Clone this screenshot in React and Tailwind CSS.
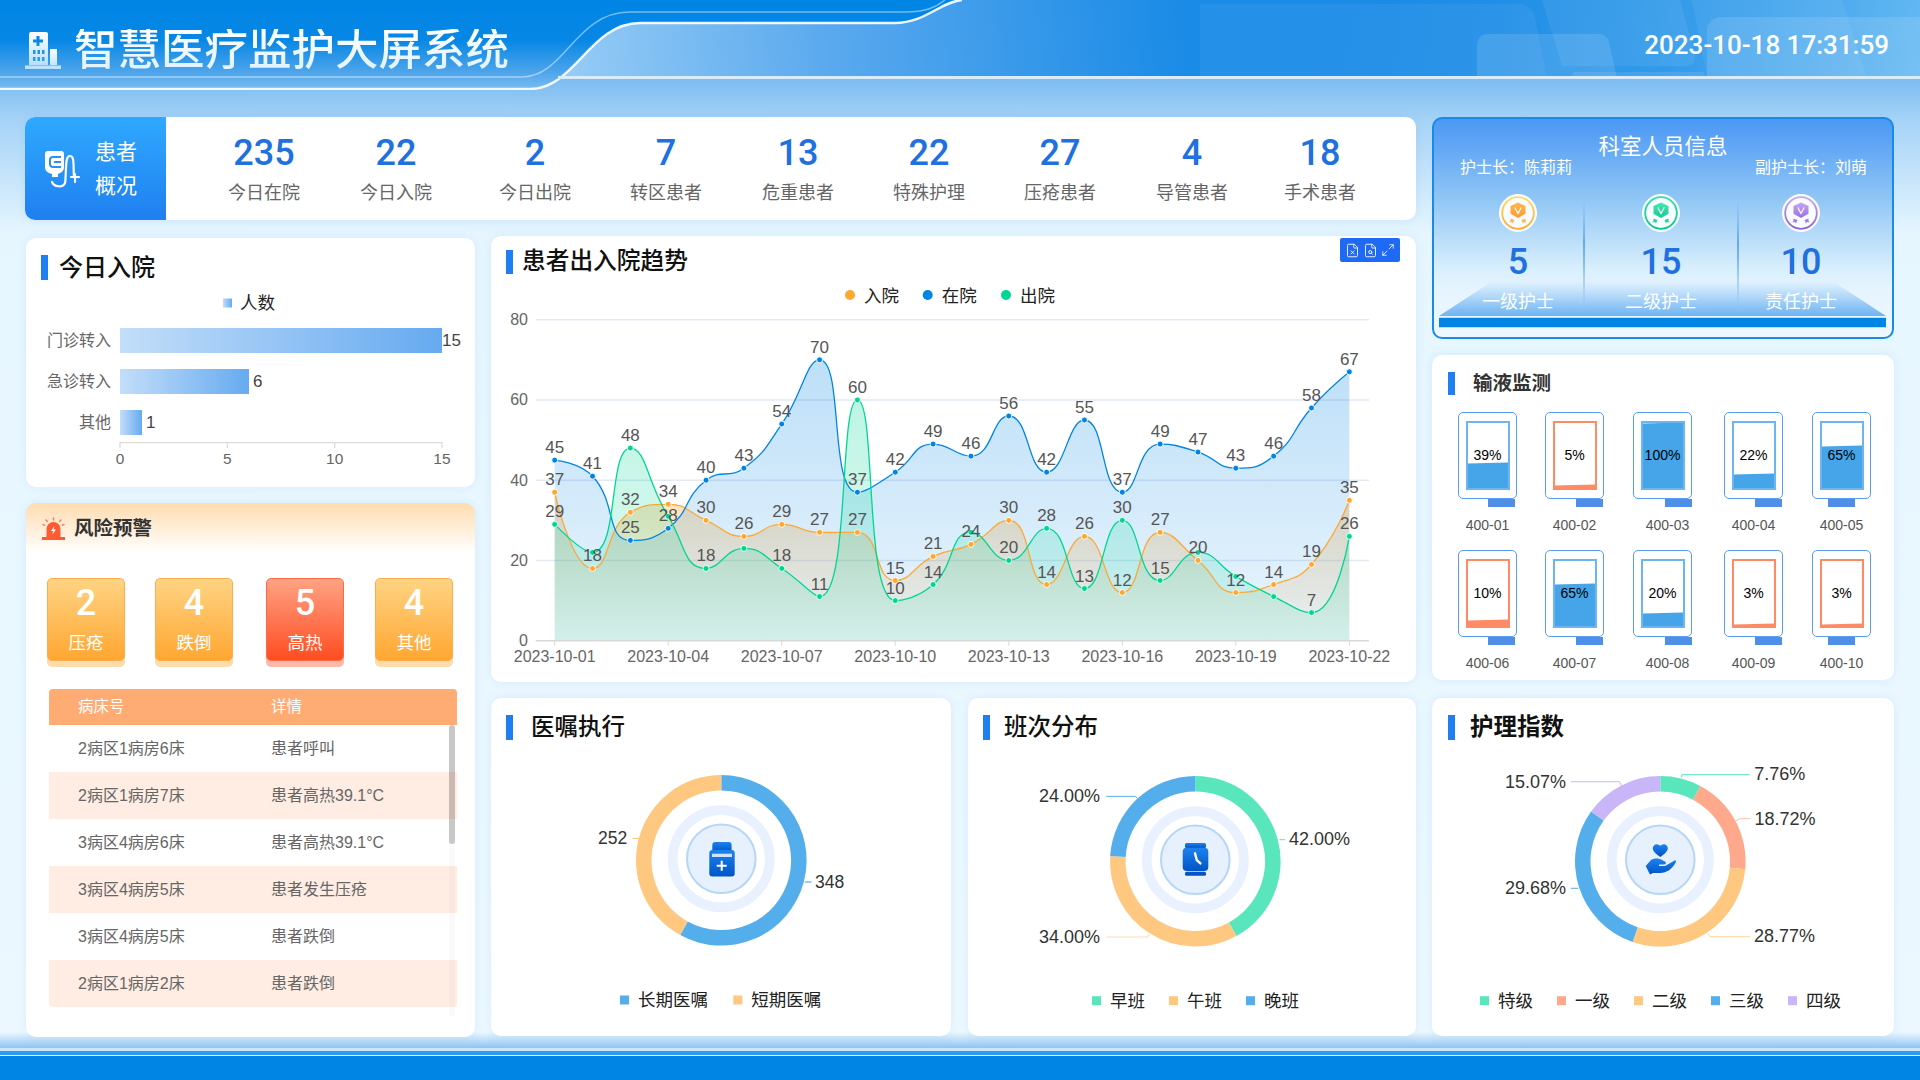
import { FileX, FileSearch, Maximize2 } from 'lucide-react';

const summaryStats = [
  { value: 235, label: '今日在院', gap: 'ml-[58px]' },
  { value: 22, label: '今日入院', gap: 'ml-[52px]' },
  { value: 2, label: '今日出院', gap: 'ml-[59px]' },
  { value: 7, label: '转区患者', gap: 'ml-[51px]' },
  { value: 13, label: '危重患者', gap: 'ml-[52px]' },
  { value: 22, label: '特殊护理', gap: 'ml-[51px]' },
  { value: 27, label: '压疮患者', gap: 'ml-[51px]' },
  { value: 4, label: '导管患者', gap: 'ml-[52px]' },
  { value: 18, label: '手术患者', gap: 'ml-[48px]' },
];

const riskCards = [
  { value: 2, label: '压疮', gap: '', tone: 'border-[#ffad4a] bg-[linear-gradient(180deg,#ffd483,#ffa631)]', strip: 'bg-[#ffdcab]' },
  { value: 4, label: '跌倒', gap: 'ml-[30px]', tone: 'border-[#ffad4a] bg-[linear-gradient(180deg,#ffd483,#ffa631)]', strip: 'bg-[#ffdcab]' },
  { value: 5, label: '高热', gap: 'ml-[33px]', tone: 'border-[#ff6a45] bg-[linear-gradient(180deg,#ffa384,#ff4c21)]', strip: 'bg-[#ffb9a9]' },
  { value: 4, label: '其他', gap: 'ml-[31px]', tone: 'border-[#ffad4a] bg-[linear-gradient(180deg,#ffd483,#ffa631)]', strip: 'bg-[#ffdcab]' },
];

const riskRows = [
  ['2病区1病房6床', '患者呼叫'],
  ['2病区1病房7床', '患者高热39.1°C'],
  ['3病区4病房6床', '患者高热39.1°C'],
  ['3病区4病房5床', '患者发生压疮'],
  ['3病区4病房5床', '患者跌倒'],
  ['2病区1病房2床', '患者跌倒'],
];

const infusions = [
  { id: '400-01', pct: 39 },
  { id: '400-02', pct: 5 },
  { id: '400-03', pct: 100, shift: 'pl-[10px]' },
  { id: '400-04', pct: 22 },
  { id: '400-05', pct: 65 },
  { id: '400-06', pct: 10 },
  { id: '400-07', pct: 65 },
  { id: '400-08', pct: 20, shift: 'pl-[10px]' },
  { id: '400-09', pct: 3 },
  { id: '400-10', pct: 3 },
];

const dates = Array.from({ length: 22 }, (_, i) => `2023-10-${String(i + 1).padStart(2, '0')}`);

const series = [
  {
    id: 'admit',
    color: '#ffa733',
    top: 0.34,
    bottom: 0.04,
    data: [37, 18, 32, 34, 30, 26, 29, 27, 27, 15, 21, 24, 30, 14, 26, 12, 27, 20, 12, 14, 19, 35],
    hidden: [],
  },
  {
    id: 'stay',
    color: '#0085e5',
    top: 0.26,
    bottom: 0.08,
    data: [45, 41, 25, 28, 40, 43, 54, 70, 37, 42, 49, 46, 56, 42, 55, 37, 49, 47, 43, 46, 58, 67],
    hidden: [],
  },
  {
    id: 'leave',
    color: '#00d694',
    top: 0.26,
    bottom: 0.1,
    data: [29, 22, 48, 31, 18, 23, 18, 11, 60, 10, 14, 27, 20, 28, 13, 30, 15, 22, 16, 11, 7, 26],
    hidden: [1, 3, 5, 11, 17, 18, 19],
  },
];

const chartX = (i) => 554.7 + i * 37.84;
const chartY = (v) => 640.7 - v * 4.0125;

function clamp(v, a, b) {
  return Math.min(Math.max(v, Math.min(a, b)), Math.max(a, b));
}

// same control point rule as a smoothed echarts line
function smoothPath(points) {
  const smooth = 0.5;
  const n = points.length;
  let d = `M${points[0][0]} ${points[0][1]}`;
  let cp0 = points[0];
  for (let i = 1; i < n; i++) {
    const [x, y] = points[i];
    const [px, py] = points[i - 1];
    if (i === n - 1) {
      d += `C${cp0[0]} ${cp0[1]} ${x} ${y} ${x} ${y}`;
      break;
    }
    const [nx, ny] = points[i + 1];
    const lenPrev = Math.hypot(x - px, y - py);
    const lenNext = Math.hypot(nx - x, ny - y);
    const ratio = lenNext / (lenNext + lenPrev);
    const ncx = clamp(x + (nx - px) * smooth * ratio, x, nx);
    const ncy = clamp(y + (ny - py) * smooth * ratio, y, ny);
    const vx = ncx - x;
    const vy = ncy - y;
    let c1x = clamp(x - (vx * lenPrev) / lenNext, px, x);
    let c1y = clamp(y - (vy * lenPrev) / lenNext, py, y);
    const ux = x - c1x;
    const uy = y - c1y;
    const ncx2 = x + (ux * lenNext) / lenPrev;
    const ncy2 = y + (uy * lenNext) / lenPrev;
    d += `C${cp0[0]} ${cp0[1]} ${c1x} ${c1y} ${x} ${y}`;
    cp0 = [ncx2, ncy2];
  }
  return d;
}

function arcPath(cx, cy, R, r, from, to) {
  const pt = (rad, a) => [cx + rad * Math.sin(a), cy - rad * Math.cos(a)];
  const [x0, y0] = pt(R, from);
  const [x1, y1] = pt(R, to);
  const [x2, y2] = pt(r, to);
  const [x3, y3] = pt(r, from);
  const large = to - from > Math.PI ? 1 : 0;
  return `M${x0} ${y0}A${R} ${R} 0 ${large} 1 ${x1} ${y1}L${x2} ${y2}A${r} ${r} 0 ${large} 0 ${x3} ${y3}Z`;
}

function SectionTitle({ children, className, gap, textClass }) {
  return (
    <div className={`flex items-center ${className}`}>
      <span className="h-full w-[7px] bg-[#1f7ff0]"></span>
      <span className={`${gap} ${textClass} whitespace-nowrap leading-none`}>{children}</span>
    </div>
  );
}

function HospitalIcon() {
  return (
    <svg width="36" height="37" viewBox="0 0 36 37">
      <defs>
        <linearGradient id="hospitalFill" x1="0" y1="0" x2="0" y2="1">
          <stop offset="0" stopColor="#ffffff" />
          <stop offset="1" stopColor="#b5e0ff" />
        </linearGradient>
      </defs>
      <path
        fill="url(#hospitalFill)"
        fillRule="evenodd"
        d="M6 0h15a2 2 0 0 1 2 2v31H4V2a2 2 0 0 1 2-2zM11.5 4v3.5H8v3h3.5V14h3v-3.5H18v-3h-3.5V4zM8 18v4h2.5v-4zM12.5 18v4H15v-4zM17 18v4h2.5v-4zM8 25v4h2.5v-4zM12.5 25v4H15v-4zM17 25v4h2.5v-4z"
      />
      <path fill="url(#hospitalFill)" d="M25 17h7v16h-7zM0 33.5h36V37H0z" />
    </svg>
  );
}

function DripIcon() {
  return (
    <svg width="60" height="55" viewBox="0 0 60 55" fill="none">
      <path fill="#fff" d="M16 10h15a3 3 0 0 1 3 3v13c0 4-3 6-6 7v3h-6v-3c-4-1-7-3-7-7V13a3 3 0 0 1 3-3z" />
      <path stroke="#2a90f5" strokeWidth="2" d="M31 16h-8a3 3 0 0 0-3 3v4a3 3 0 0 0 3 3h8M24 21h7" />
      <path
        stroke="#fff"
        strokeWidth="2.2"
        strokeLinecap="round"
        d="M22 41c2 5 11 6 13 1 1-3 .5-20 2-24 1-4 5-4 6 0 1 5 .5 14 1 18M41 36h8M45 33v8"
      />
    </svg>
  );
}

function AlarmIcon() {
  return (
    <svg width="23" height="23" viewBox="0 0 23 23" fill="none">
      <path fill="#ff5a30" d="M4.5 20v-8a7 7 0 0 1 14 0v8zM0 20h23v3H0z" />
      <path fill="#fff" d="M12.5 9l-3.5 5h2.2l-1 3.8 3.8-5.3h-2.3z" />
      <path stroke="#ff7a50" strokeWidth="1.4" strokeLinecap="round" d="M11.5 1v2M4 3l1.3 1.5M19 3l-1.3 1.5M1 7.5l1.7.7M22 7.5l-1.7.7" />
    </svg>
  );
}

function MedalIcon({ id, ring, ringEnd, shield, shieldEnd, ribbon }) {
  return (
    <svg width="38" height="38" viewBox="0 0 38 38">
      <defs>
        <linearGradient id={`${id}Ring`} x1="0" y1="0" x2="0" y2="1">
          <stop offset="0" stopColor={ring} />
          <stop offset="1" stopColor={ringEnd} />
        </linearGradient>
        <linearGradient id={`${id}Shield`} x1="0" y1="0" x2="0" y2="1">
          <stop offset="0" stopColor={shield} />
          <stop offset="1" stopColor={shieldEnd} />
        </linearGradient>
      </defs>
      <circle cx="19" cy="19" r="18.5" fill="#f7fbff" stroke="#ffffff" />
      <circle cx="19" cy="19" r="15.8" fill="#f9fcff" stroke={`url(#${id}Ring)`} strokeWidth="1.8" />
      <path fill={`url(#${id}Shield)`} d="M19 8.5l7.5 3.6v7.6L19 24l-7.5-4.3v-7.6z" />
      <path fill="none" stroke="#fff" strokeWidth="1.2" d="M15.8 13.5l3.2 6 3.2-6" />
      <path fill={ribbon} d="M11.5 24.5l4 1.5-1.5 3.5-1-1.5-2.5.5 1-2zM26.5 24.5l-4 1.5 1.5 3.5 1-1.5 2.5.5-1-2z" />
    </svg>
  );
}

function AdmissionBars() {
  const bars = [
    { label: '门诊转入', value: 15, y: 328, end: 442 },
    { label: '急诊转入', value: 6, y: 369, end: 249 },
    { label: '其他', value: 1, y: 410, end: 142 },
  ];
  return (
    <svg className="block h-[207px] w-[449px]" viewBox="26 280 449 207">
      <defs>
        <linearGradient id="barFill" x1="0" y1="0" x2="1" y2="0">
          <stop offset="0" stopColor="#c3def9" />
          <stop offset="1" stopColor="#66aaf0" />
        </linearGradient>
      </defs>
      <rect x="223" y="298.5" width="9" height="9" fill="url(#barFill)" />
      <text x="240" y="308.5" fontSize="17.5" fill="#222">人数</text>
      {bars.map((bar) => (
        <g key={bar.label}>
          <text x="111" y={bar.y + 18} fontSize="16" fill="#666" textAnchor="end">{bar.label}</text>
          <rect x="120" y={bar.y} width={bar.end - 120} height="25" fill="url(#barFill)" />
          <text x={bar.end + (bar.value === 15 ? 0 : 4)} y={bar.y + 18} fontSize="17" fill="#444">{bar.value}</text>
        </g>
      ))}
      <path d="M120 448V442.7H442V448M227.3 442.7V448M334.7 442.7V448" fill="none" stroke="#dcdcdc" strokeWidth="1.3" />
      {[0, 5, 10, 15].map((tick, i) => (
        <text key={tick} x={120 + i * 107.33} y="464" fontSize="15.5" fill="#666" textAnchor="middle">{tick}</text>
      ))}
    </svg>
  );
}

function TrendChart() {
  return (
    <svg className="block h-[408px] w-[925px]" viewBox="491 274 925 408">
      <defs>
        {series.map((s) => (
          <linearGradient key={s.id} id={`${s.id}Area`} x1="0" y1="0" x2="0" y2="1">
            <stop offset="0" stopColor={s.color} stopOpacity={s.top} />
            <stop offset="1" stopColor={s.color} stopOpacity={s.bottom} />
          </linearGradient>
        ))}
      </defs>

      {[
        { x: 850, text: '入院', color: '#ffa733' },
        { x: 927.7, text: '在院', color: '#0085e5' },
        { x: 1006, text: '出院', color: '#00d694' },
      ].map((item) => (
        <g key={item.text}>
          <circle cx={item.x} cy="295" r="5" fill={item.color} />
          <text x={item.x + 14} y="301.5" fontSize="17.5" fill="#222">{item.text}</text>
        </g>
      ))}

      {[80, 60, 40, 20].map((v) => (
        <line key={v} x1="535.7" x2="1369" y1={chartY(v)} y2={chartY(v)} stroke="#e3e9f3" strokeWidth="1.4" />
      ))}
      {[80, 60, 40, 20, 0].map((v) => (
        <text key={v} x="528" y={chartY(v) + 5.5} fontSize="16" fill="#666" textAnchor="end">{v}</text>
      ))}

      {series.map((s) => {
        const points = s.data.map((v, i) => [chartX(i), chartY(v)]);
        const line = smoothPath(points);
        return (
          <path
            key={s.id}
            d={`${line}L${chartX(21)} ${chartY(0)}L${chartX(0)} ${chartY(0)}Z`}
            fill={`url(#${s.id}Area)`}
          />
        );
      })}

      <line x1="535.7" x2="1369" y1={chartY(0)} y2={chartY(0)} stroke="#d8d8d8" strokeWidth="1.4" />
      {dates.map((date, i) =>
        i % 3 === 0 ? (
          <g key={date}>
            <line x1={chartX(i)} x2={chartX(i)} y1={chartY(0)} y2={chartY(0) + 5} stroke="#d8d8d8" />
            <text x={chartX(i)} y="661.5" fontSize="16" fill="#666" textAnchor="middle">{date}</text>
          </g>
        ) : null
      )}

      {series.map((s) => (
        <path
          key={s.id}
          d={smoothPath(s.data.map((v, i) => [chartX(i), chartY(v)]))}
          fill="none"
          stroke={s.color}
          strokeWidth="1.3"
        />
      ))}
      {series.map((s) =>
        s.data.map((v, i) => (
          <circle key={`${s.id}${i}`} cx={chartX(i)} cy={chartY(v)} r="3" fill={s.color} stroke="#fff" strokeWidth="0.9" />
        ))
      )}
      {series.map((s) =>
        s.data.map((v, i) =>
          s.hidden.includes(i) ? null : (
            <text key={`${s.id}t${i}`} x={chartX(i)} y={chartY(v) - 7} fontSize="17" fill="#555" textAnchor="middle">
              {v}
            </text>
          )
        )
      )}
    </svg>
  );
}

function DonutBase({ cx, cy, segments }) {
  const total = segments.reduce((sum, s) => sum + s.value, 0);
  let angle = 0;
  return (
    <>
      {segments.map((s) => {
        const from = angle;
        angle += (s.value / total) * Math.PI * 2;
        return <path key={s.color} d={arcPath(cx, cy, 85.3, 69.8, from, angle)} fill={s.color} />;
      })}
      <circle cx={cx} cy={cy - 1.5} r="48.6" fill="none" stroke="#e8f1fd" strokeWidth="9.7" />
      <circle cx={cx} cy={cy - 1.5} r="34.3" fill="#e6f1fd" stroke="#b6d6f6" strokeWidth="2" />
    </>
  );
}

function IconGradient({ id }) {
  return (
    <linearGradient id={id} x1="0" y1="0" x2="0" y2="1">
      <stop offset="0" stopColor="#1d82ee" />
      <stop offset="1" stopColor="#0054c6" />
    </linearGradient>
  );
}

function Legend({ items, y }) {
  return items.map((item) => (
    <g key={item.text}>
      <rect x={item.x} y={y - 4.5} width="9" height="9" fill={item.color} />
      <text x={item.x + 18} y={y + 6.3} fontSize="17.5" fill="#222">{item.text}</text>
    </g>
  ));
}

function OrderDonut() {
  return (
    <svg className="block h-[296px] w-[460px]" viewBox="491 740 460 296">
      <defs><IconGradient id="bottleFill" /></defs>
      <DonutBase cx={721.3} cy={860.3} segments={[{ value: 348, color: '#55aeec' }, { value: 252, color: '#ffc880' }]} />
      <rect x="712.3" y="842" width="19.3" height="10" rx="3" fill="url(#bottleFill)" />
      <rect x="709.3" y="850" width="25.4" height="26.6" rx="3" fill="url(#bottleFill)" />
      <rect x="712" y="853.7" width="20" height="3.3" fill="#cfe4fb" />
      <path d="M721.7 860.7v10M716.7 865.7h10" stroke="#fff" strokeWidth="2" />
      <path d="M805 882h6.5" stroke="#55aeec" strokeWidth="1.2" />
      <path d="M632.5 838.5h6.5" stroke="#ffc880" strokeWidth="1.2" />
      <text x="815" y="888" fontSize="17.5" fill="#333">348</text>
      <text x="598" y="844" fontSize="17.5" fill="#333">252</text>
      <Legend
        y={1000}
        items={[
          { x: 620, text: '长期医嘱', color: '#55aeec' },
          { x: 733.3, text: '短期医嘱', color: '#ffc880' },
        ]}
      />
    </svg>
  );
}

function ShiftDonut() {
  return (
    <svg className="block h-[296px] w-[448px]" viewBox="968 740 448 296">
      <defs><IconGradient id="watchFill" /></defs>
      <DonutBase
        cx={1195.3}
        cy={861.3}
        segments={[
          { value: 42, color: '#5ae6bc' },
          { value: 34, color: '#ffc880' },
          { value: 24, color: '#55aeec' },
        ]}
      />
      <rect x="1185" y="843" width="21" height="5" rx="1.5" fill="url(#watchFill)" />
      <rect x="1182.7" y="847.7" width="25.6" height="23.3" rx="4" fill="url(#watchFill)" />
      <rect x="1185" y="871.7" width="21" height="4" rx="1.5" fill="#0054c6" />
      <path d="M1195 853.3l1.8 6.7 3.6 3.4" fill="none" stroke="#fff" strokeWidth="2.4" strokeLinecap="round" />
      <path d="M1106.3 796.3h29l2 2" fill="none" stroke="#55aeec" strokeWidth="1" />
      <path d="M1106.3 937h41l1.7-2.7" fill="none" stroke="#ffdcb0" strokeWidth="1.2" />
      <path d="M1279.5 839.7h5.5" fill="none" stroke="#5ae6bc" strokeWidth="1" />
      <text x="1039" y="802.3" fontSize="18" fill="#333">24.00%</text>
      <text x="1039" y="943.3" fontSize="18" fill="#333">34.00%</text>
      <text x="1289" y="844.6" fontSize="18" fill="#333">42.00%</text>
      <Legend
        y={1000.7}
        items={[
          { x: 1092, text: '早班', color: '#5ae6bc' },
          { x: 1169, text: '午班', color: '#ffc880' },
          { x: 1246, text: '晚班', color: '#55aeec' },
        ]}
      />
    </svg>
  );
}

function CareDonut() {
  return (
    <svg className="block h-[296px] w-[461px]" viewBox="1432 740 461 296">
      <defs><IconGradient id="careFill" /></defs>
      <DonutBase
        cx={1660.3}
        cy={861.3}
        segments={[
          { value: 7.76, color: '#5ae6bc' },
          { value: 18.72, color: '#ffa98c' },
          { value: 28.77, color: '#ffc880' },
          { value: 29.68, color: '#55aeec' },
          { value: 15.07, color: '#c8b6f8' },
        ]}
      />
      <path
        fill="url(#careFill)"
        d="M1660.3 857c-5-3.6-7.5-6-7.5-8.8 0-2.3 1.8-4 4-4 1.4 0 2.7.7 3.5 1.9.8-1.2 2.1-1.9 3.5-1.9 2.2 0 4 1.7 4 4 0 2.8-2.5 5.2-7.5 8.8z"
      />
      <path
        fill="url(#careFill)"
        d="M1645.7 866l5.3-6c3-2 8-2 11 0l3 1.500c1.500 1 1 3-1 3h-5v1.500h6l10.500-6 .5 2c-4 7-9 11-16 11h-7l-3 1.500z"
      />
      <path d="M1681.7 777.300v-2.600h68" fill="none" stroke="#5ae6bc" strokeWidth="1" />
      <path d="M1736 821l4-2.300h10" fill="none" stroke="#ffbfa8" strokeWidth="1" />
      <path d="M1707.700 933.300l2.300 3.400h40" fill="none" stroke="#ffd49c" strokeWidth="1" />
      <path d="M1571 888.300h7.300" fill="none" stroke="#55aeec" strokeWidth="1" />
      <path d="M1571 781.700h48.300l2.300 4" fill="none" stroke="#c8b6f8" strokeWidth="1" />
      <text x="1754.300" y="779.500" fontSize="18" fill="#333">7.76%</text>
      <text x="1754.500" y="825" fontSize="18" fill="#333">18.72%</text>
      <text x="1754" y="942.300" fontSize="18" fill="#333">28.77%</text>
      <text x="1566" y="894" fontSize="18" fill="#333" textAnchor="end">29.68%</text>
      <text x="1566" y="787.600" fontSize="18" fill="#333" textAnchor="end">15.07%</text>
      <Legend
        y={1000.7}
        items={[
          { x: 1480, text: '特级', color: '#5ae6bc' },
          { x: 1557, text: '一级', color: '#ffa98c' },
          { x: 1634, text: '二级', color: '#ffc880' },
          { x: 1711, text: '三级', color: '#55aeec' },
          { x: 1788, text: '四级', color: '#c8b6f8' },
        ]}
      />
    </svg>
  );
}

function InfusionBag({ id, pct, shift }) {
  const low = pct <= 10;
  return (
    <div>
      <div className="relative flex h-[87px] w-[59px] items-center justify-center rounded-[5px] border-[1.5px] border-[#5a9cf0] bg-white">
        <div className={`relative h-[69px] w-[44px] overflow-hidden border-2 ${low ? 'border-[#ff8a66]' : 'border-[#6db5f0]'}`}>
          <div
            className={`absolute inset-x-[-2px] -skew-y-[1.5deg] ${low ? 'bg-[#ff8a66]' : 'bg-[#45a5e8]'}`}
            style={{ bottom: -4, height: `calc(${pct}% + 4px)` }}
          ></div>
        </div>
        <span className="absolute inset-0 flex items-center justify-center pb-[1px] text-[14px] leading-none text-black">{pct}%</span>
      </div>
      <div className="mx-auto h-[8px] w-[27px] bg-[#4f8fe8]"></div>
      <div className={`mt-[8px] flex h-[20px] w-[59px] items-center justify-center whitespace-nowrap text-[14px] text-[#555] ${shift || ''}`}>{id}</div>
    </div>
  );
}

function Header() {
  return (
    <header className="relative flex h-[90px] shrink-0 justify-between">
      <svg className="absolute inset-0 h-[90px] w-[1920px]" viewBox="0 0 1920 90">
        <defs>
          <linearGradient id="headLight" gradientUnits="userSpaceOnUse" x1="540" y1="80" x2="1180" y2="0">
            <stop offset="0" stopColor="#9ccff6" />
            <stop offset="0.45" stopColor="#5aa9ee" />
            <stop offset="1" stopColor="#1a8be6" />
          </linearGradient>
          <linearGradient id="headRight" gradientUnits="userSpaceOnUse" x1="1300" y1="0" x2="1920" y2="78">
            <stop offset="0" stopColor="#1a8be6" stopOpacity="0" />
            <stop offset="1" stopColor="#63b8f2" />
          </linearGradient>
          <linearGradient id="headDark" x1="0" y1="0" x2="0" y2="1">
            <stop offset="0" stopColor="#0085e5" />
            <stop offset="0.45" stopColor="#0787e5" />
            <stop offset="0.82" stopColor="#4fa5eb" />
            <stop offset="1" stopColor="#79bcf1" />
          </linearGradient>
        </defs>
        <rect width="1920" height="78" fill="url(#headLight)" />
        <rect width="1920" height="78" fill="url(#headRight)" />
        <path fill="#fff" fillOpacity="0.05" d="M1200 4h320a16 16 0 0 1 15 14l12 60h-347z" />
        <path fill="#fff" fillOpacity="0.07" d="M1542 0h138l15 56a8 8 0 0 1-8 10h-125z" />
        <path fill="#fff" fillOpacity="0.06" d="M1692 0h150l25 78h-160z" />
        <path fill="#fff" fillOpacity="0.12" d="M1477 44a10 10 0 0 1 10-10h112a10 10 0 0 1 10 8l8 36h-140z" />
        <path fill="#fff" fillOpacity="0.12" d="M1707 30a14 14 0 0 1 14-13h199v61h-213z" />
        <path fill="#fff" fillOpacity="0.1" d="M1570 78l4-6h130l2 6z" />
        <path fill="url(#headDark)" d="M0 0H962C940 2 925 23 895 23H640C590 23 575 89 530 89H0Z" />
        <path fill="none" stroke="#fff" strokeOpacity="0.45" strokeWidth="1.5" d="M0 77H522C565 77 575 12 630 12H905C925 12 935 8 945 0" />
        <path fill="none" stroke="#fff" strokeOpacity="0.9" strokeWidth="2.4" d="M0 89H530C575 89 590 23 640 23H895C925 23 940 2 962 0" />
        <rect x="558" y="76" width="1362" height="3" fill="#d9ecfb" />
      </svg>
      <div className="relative ml-[25px] mt-[32px] flex h-[37px] items-center">
        <HospitalIcon />
        <h1 className="ml-[13px] whitespace-nowrap bg-[linear-gradient(180deg,#ffffff,#dff1ff)] bg-clip-text text-[43.500px] font-medium leading-none text-transparent">
          智慧医疗监护大屏系统
        </h1>
      </div>
      <div className="relative mr-[31px] mt-[30px] h-[30px] font-['Roboto','Noto_Sans_CJK_SC',sans-serif] text-[26px] font-medium leading-[30px] text-white">
        2023-10-18 17:31:59
      </div>
    </header>
  );
}

export default function App() {
  const cardClass = 'rounded-[10px] bg-white shadow-[0_0_10px_rgba(70,150,235,0.12)]';
  return (
    <div className="flex h-[1080px] w-[1920px] flex-col overflow-hidden bg-[linear-gradient(180deg,#7cbcf1_80px,#a6d3f6_120px,#e6f6ff_235px,#ecf8ff_1032px,#8fc4f0_1048px)] font-['Liberation_Sans','Noto_Sans_CJK_SC',sans-serif]">
      <Header />

      <main className="flex h-[958px] shrink-0 gap-[16px] pl-[25px]">
        <div className="w-[1391px] pt-[27px]">
          {/* Summary */}
          <section className={`flex h-[103px] ${cardClass}`}>
            <div className="flex w-[141px] shrink-0 items-center rounded-l-[10px] bg-[linear-gradient(180deg,#2fa9ff,#1f7ff0)] pl-[5px]">
              <DripIcon />
              <div className="ml-[5px] text-[21px] leading-[34px] text-white">
                <div>患者</div>
                <div>概况</div>
              </div>
            </div>
            {summaryStats.map((stat) => (
              <div key={stat.label} className={`w-[80px] shrink-0 pt-[14px] text-center ${stat.gap}`}>
                <div className="h-[44px] font-['Roboto','Noto_Sans_CJK_SC',sans-serif] text-[36px] font-medium leading-[44px] text-[#2170e0]">{stat.value}</div>
                <div className="mt-[5px] whitespace-nowrap text-[18px] leading-[26px] text-[#666]">{stat.label}</div>
              </div>
            ))}
          </section>

          <div className="mt-[16px] flex gap-[16px]">
            {/* Left column */}
            <div className="ml-[1px] mt-[2px] w-[449px] shrink-0">
              <section className={`h-[249px] pt-[17px] ${cardClass}`}>
                <SectionTitle className="ml-[15px] h-[25px]" gap="ml-[11px]" textClass="text-[24px] font-medium text-[#111]">今日入院</SectionTitle>
                <AdmissionBars />
              </section>

              <section className={`mt-[16px] h-[534px] bg-[linear-gradient(180deg,#ffdcb0_0,#ffffff_50px)] ${cardClass}`}>
                <div className="flex h-[23px] items-center pl-[16px] mt-[0] pt-[0] translate-y-[14px]">
                  <AlarmIcon />
                  <span className="ml-[9px] text-[19.500px] font-bold leading-none text-[#333]">风险预警</span>
                </div>
                <div className="mt-[52px] flex pl-[21px]">
                  {riskCards.map((card) => (
                    <div key={card.label} className={`w-[78px] ${card.gap}`}>
                      <div className={`relative z-10 flex h-[83px] flex-col items-center rounded-[5px] border text-white ${card.tone}`}>
                        <span className="mt-[3px] h-[42px] font-['Roboto','Noto_Sans_CJK_SC',sans-serif] text-[36px] font-medium leading-[42px]">{card.value}</span>
                        <span className="mt-[7px] text-[17.500px] leading-[24px]">{card.label}</span>
                      </div>
                      <div className={`-mt-[5px] h-[11px] rounded-b-[5px] ${card.strip}`}></div>
                    </div>
                  ))}
                </div>

                {/* Risk table */}
                <div className="relative ml-[23px] mt-[22px] w-[408px]">
                  <div className="flex h-[36px] items-center rounded-t-[4px] bg-[#ffab73] text-[15.500px] text-white">
                    <span className="w-[222px] pl-[29px]">病床号</span>
                    <span>详情</span>
                  </div>
                  {riskRows.map((row, i) => (
                    <div
                      key={`${row[0]}${i}`}
                      className={`flex h-[47px] items-center text-[16px] text-[#666] ${i % 2 === 1 ? 'bg-[#ffede3]' : 'bg-white'} ${i === 5 ? 'rounded-b-[4px]' : ''}`}
                    >
                      <span className="w-[222px] pl-[29px]">{row[0]}</span>
                      <span>{row[1]}</span>
                    </div>
                  ))}
                  <div className="absolute left-[400px] top-[36px] h-[292px] w-[6px] rounded-[3px] bg-black/[0.02]"></div>
                  <div className="absolute left-[400px] top-[36px] h-[119px] w-[6px] rounded-[3px] bg-black/20"></div>
                </div>
              </section>
            </div>

            {/* Middle column */}
            <div className="w-[925px] shrink-0">
              <section className={`relative h-[446px] pt-[14px] ${cardClass}`}>
                <SectionTitle className="ml-[15px] h-[24px]" gap="ml-[9px]" textClass="text-[23.700px] font-medium text-[#111]">患者出入院趋势</SectionTitle>
                <TrendChart />
                <div className="absolute right-[16px] top-[2px] flex h-[24px] w-[60px] items-center justify-center gap-[3px] rounded-[2px] bg-[#1f6af5] text-white">
                  <FileX size={15} strokeWidth={1.4} />
                  <FileSearch size={15} strokeWidth={1.4} />
                  <Maximize2 size={14} strokeWidth={1.4} />
                </div>
              </section>

              <div className="mt-[16px] flex gap-[17px]">
                <section className={`h-[338px] w-[460px] pt-[17px] ${cardClass}`}>
                  <SectionTitle className="ml-[15px] h-[25px]" gap="ml-[18px]" textClass="text-[23.500px] font-medium text-[#111]">医嘱执行</SectionTitle>
                  <OrderDonut />
                </section>
                <section className={`h-[338px] w-[448px] pt-[17px] ${cardClass}`}>
                  <SectionTitle className="ml-[15px] h-[25px]" gap="ml-[14px]" textClass="text-[23.500px] font-medium text-[#111]">班次分布</SectionTitle>
                  <ShiftDonut />
                </section>
              </div>
            </div>
          </div>
        </div>

        {/* Right column */}
        <div className="w-[462px] shrink-0 pt-[27px]">
          <section className="relative h-[222px] rounded-[10px] border-2 border-[#1a8ae8] bg-[linear-gradient(180deg,#4a97f4_0,#90c6f5_80px,#d9effd_150px,#e6f4ff_170px,#eef8ff_100%)]">
            <div className="absolute bottom-[21px] left-[5px] right-[6px] h-[35px] bg-[linear-gradient(180deg,rgba(255,255,255,0),#6db3f2)] [clip-path:polygon(12%_0,88%_0,100%_100%,0_100%)]"></div>
            <div className="absolute bottom-[9px] left-[5px] right-[6px] h-[11px] border-y border-[#bcdcf7] bg-[#0085e5]"></div>
            <div className="relative">
              <h2 className="pt-[13px] text-center text-[21.500px] font-normal leading-[30px] text-white">科室人员信息</h2>
              <div className="-mt-[4px] flex h-[20px] justify-between pl-[26px] pr-[25px] text-[16px] leading-[20px] text-white">
                <span>护士长：陈莉莉</span>
                <span>副护士长：刘萌</span>
              </div>
              <div className="flex pl-[18px] text-center">
                {[
                  { w: 'w-[132px]', value: 5, label: '一级护士', medal: { id: 'medalGold', ring: '#ffdf5c', ringEnd: '#ffa733', shield: '#ffb84d', shieldEnd: '#ff9a2e', ribbon: '#ffb84d' } },
                  { w: 'w-[154px]', value: 15, label: '二级护士', medal: { id: 'medalGreen', ring: '#2fe0a8', ringEnd: '#00c985', shield: '#48e8b4', shieldEnd: '#12c98f', ribbon: '#28d69c' } },
                  { w: 'w-[126px]', value: 10, label: '责任护士', medal: { id: 'medalPurple', ring: '#c8a6f0', ringEnd: '#8f5fd0', shield: '#c8a6f5', shieldEnd: '#9a6fe0', ribbon: '#a57fe0' } },
                ].map((col, i) => (
                  <div key={col.label} className={`relative ${col.w}`}>
                    {i > 0 && <span className="absolute left-[-1px] top-[22px] h-[108px] w-[2px] bg-[linear-gradient(180deg,rgba(60,140,230,0),#62a9ee_40%,rgba(60,140,230,0))]"></span>}
                    <div className="mx-auto mt-[16px] h-[38px] w-[38px]">
                      <MedalIcon {...col.medal} />
                    </div>
                    <div className="mt-[10px] h-[40px] font-['Roboto','Noto_Sans_CJK_SC',sans-serif] text-[36px] font-medium leading-[40px] text-[#2170e0]">{col.value}</div>
                    <div className="mt-[8px] text-[18px] leading-[24px] text-white">{col.label}</div>
                  </div>
                ))}
              </div>
            </div>
          </section>

          <section className={`mt-[16px] h-[325px] pt-[17px] ${cardClass}`}>
            <SectionTitle className="ml-[16px] h-[23px]" gap="ml-[18px]" textClass="text-[19.500px] font-bold text-[#333]">输液监测</SectionTitle>
            <div className="ml-[26px] mt-[17px] grid grid-cols-[87px_88px_91px_88px_59px] gap-y-[15px]">
              {infusions.map((bag) => (
                <InfusionBag key={bag.id} {...bag} />
              ))}
            </div>
          </section>

          <section className={`mt-[18px] h-[338px] pt-[17px] ${cardClass}`}>
            <SectionTitle className="ml-[16px] h-[25px]" gap="ml-[15px]" textClass="text-[23.500px] font-bold text-[#111]">护理指数</SectionTitle>
            <CareDonut />
          </section>
        </div>
      </main>

      <footer className="h-[32px] shrink-0 bg-[#0085e5]">
        <div className="h-[3px] bg-[#cfe6fa]"></div>
        <div className="h-[4px] bg-[#2c9cf0]"></div>
        <div className="h-[1px] bg-white"></div>
      </footer>
    </div>
  );
}
